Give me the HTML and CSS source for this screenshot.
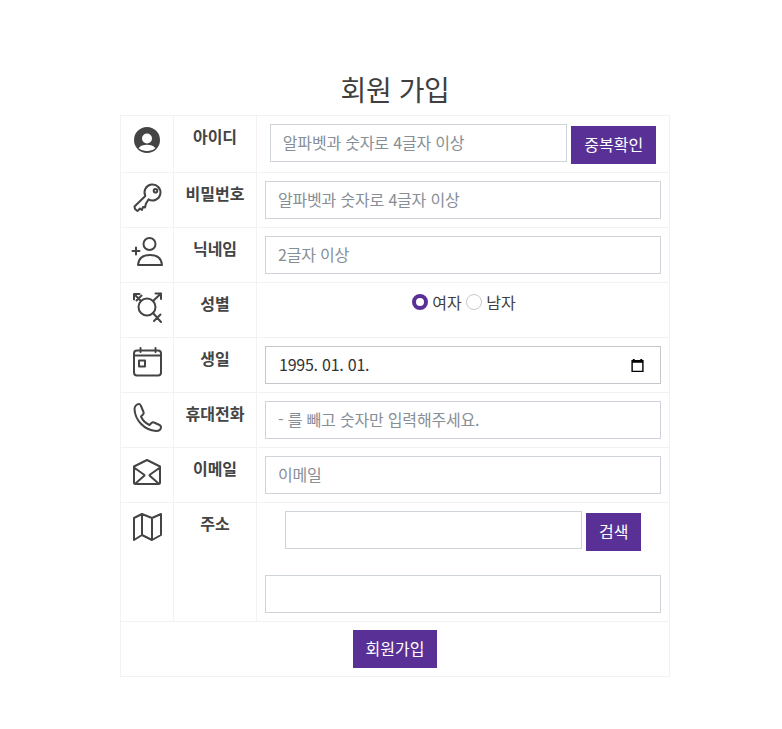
FILE: index.html
```html
<!DOCTYPE html>
<html lang="ko">
<head>
<meta charset="utf-8">
<title>회원 가입</title>
<link rel="stylesheet" href="styles.css">
</head>
<body>
<main class="page">
<h1 class="title">회원 가입</h1>
<table class="form">
<colgroup><col class="c1"><col class="c2"><col class="c3"></colgroup>
<tr>
<td class="ic"><svg class="icon" viewBox="0 0 32 32"><path class="solid" fill-rule="evenodd" d="M16 3a13 13 0 1 0 0 26a13 13 0 0 0 0-26ZM16 9.500a5 5 0 1 1 0 10a5 5 0 0 1 0-10ZM7.600 24.200C9.400 21.600 12.500 20.800 16 20.800s6.600.8 8.400 3.400A11 11 0 0 1 16 27a11 11 0 0 1-8.400-2.800Z"/></svg></td>
<th>아이디</th>
<td><input class="field short" placeholder="알파벳과 숫자로 4글자 이상"> <button class="btn">중복확인</button></td>
</tr>
<tr>
<td class="ic"><svg class="icon" viewBox="0 0 32 32"><path d="M14.300 15L3.500 25.500L4 28L6.500 30L9 27.500L11 29L12 26L14 26.500L15 22.500L17.500 18.400A8 8 0 1 0 14.300 15Z"/><circle cx="24.500" cy="9.700" r="1.800"/></svg></td>
<th>비밀번호</th>
<td><input class="field" placeholder="알파벳과 숫자로 4글자 이상"></td>
</tr>
<tr>
<td class="ic"><svg class="icon" viewBox="0 0 32 32"><circle cx="18.500" cy="8" r="6"/><path d="M7 29C7.500 22.500 12 19 19 19S30.500 22.500 31 29ZM1.500 15H8.500M5 11.500V18.500"/></svg></td>
<th>닉네임</th>
<td><input class="field" placeholder="2글자 이상"></td>
</tr>
<tr>
<td class="ic"><svg class="icon" viewBox="0 0 32 32"><circle cx="16" cy="16" r="8.500"/><path d="M22 10L30 2.500M24.500 2.500H30V8M10 10L3 3M3 8.500V3H8.500M5.500 9.500L10.500 4.500M22 22L30 31M23 30L29.500 23.500"/></svg></td>
<th>성별</th>
<td class="radios"><label class="opt"><span class="radio on"></span>여자</label> <label class="opt"><span class="radio"></span>남자</label></td>
</tr>
<tr>
<td class="ic"><svg class="icon" viewBox="0 0 32 32"><rect x="3" y="4.500" width="27" height="25" rx="3"/><path d="M3 9.500H30M9.500 2V6M24.500 2V6"/><rect x="8" y="14.500" width="6" height="6"/></svg></td>
<th>생일</th>
<td><div class="field date"><span>1995. 01. 01.</span><svg class="cal" viewBox="0 0 16 16"><path d="M3 1h2v1h6V1h2v1h1.500v13h-13V2H3ZM3 5v8.500h10V5Z"/></svg></div></td>
</tr>
<tr>
<td class="ic"><svg class="icon" viewBox="0 0 32 32"><path d="M8 3C6 3 3.500 5 3.500 8C4 19 13 29 25 30C28 30 30 28.500 30 26C30 25 29.500 24.500 28.500 24L23 21.500C22 21 21.200 21.300 20.500 22L18.500 24C15 22.500 11.500 19 10 15.500L12 13.500C12.800 12.800 13 12 12.500 11L10 5C9.600 3.800 9 3 8 3Z"/></svg></td>
<th>휴대전화</th>
<td><input class="field" placeholder="- 를 빼고 숫자만 입력해주세요."></td>
</tr>
<tr>
<td class="ic"><svg class="icon" viewBox="0 0 32 32"><path d="M3 10.500L16 4L29 10.500V26.500C29 27.500 28.500 28 27.500 28H4.500C3.500 28 3 27.500 3 26.500ZM3 11.500L13.500 19M29 11.500L18.500 19M5 27L13.500 19.500M27 27L18.500 19.500"/></svg></td>
<th>이메일</th>
<td><input class="field" placeholder="이메일"></td>
</tr>
<tr>
<td class="ic"><svg class="icon" viewBox="0 0 32 32"><path d="M3 7L11 3L21 7L30 3V24L21 29L11 24L3 29ZM11 3V24M21 7V29"/></svg></td>
<th>주소</th>
<td><input class="field short2"> <button class="btn">검색</button><br><br><input class="field"></td>
</tr>
<tr>
<td class="submit" colspan="3"><button class="btn">회원가입</button></td>
</tr>
</table>
</main>
</body>
</html>
```
FILE: styles.css
```css
* { box-sizing: border-box; }
body {
  margin: 0;
  background: #fff;
  color: #3f3f3f;
  font: 400 16px/24px "Noto Sans CJK KR", "Noto Sans", sans-serif;
}
.page { width: 550px; margin: 0 0 0 120px; padding-top: 70px; }
.title {
  margin: 0;
  font-size: 28px;
  font-weight: 400;
  line-height: 39px;
  height: 45px;
  letter-spacing: -0.4px;
  text-align: center;
  color: #3f3f3f;
}
.form { width: 550px; border-collapse: collapse; table-layout: fixed; border: 1px solid #f2f2f2; }
.c1 { width: 53px; }
.c2 { width: 83px; }
td, th { border: 1px solid #f2f2f2; padding: 8px; vertical-align: top; text-align: center; }
th { font-weight: 700; color: #444; }
.ic { padding: 0; }
.icon { display: block; width: 32px; height: 32px; margin: 8px auto 0; fill: none; stroke: #444; stroke-width: 2; stroke-linejoin: round; stroke-linecap: round; overflow: visible; }
.solid { fill: #444; stroke: none; }
.field {
  width: 396px;
  height: 38px;
  padding: 5px 12px 7px;
  border: 1px solid #ced4da;
  border-radius: 0;
  font: inherit;
  letter-spacing: -0.18px;
  color: #3f3f3f;
  background: #fff;
  outline: 0;
}
.field::placeholder { color: #868e96; opacity: 1; }
.short, .short2 { width: 297px; }
.btn {
  height: 38px;
  padding: 0 13px 2px;
  border: 0;
  background: #593196;
  color: #fff;
  font: inherit;
  vertical-align: -2px;
}
.submit .btn { vertical-align: top; }
.date { display: flex; align-items: center; justify-content: space-between; padding-left: 13px; border-color: #c6c6cc; color: #333; letter-spacing: -0.24px; }
.cal { width: 15px; height: 15px; margin: 2px 3px 0 0; fill: #000; }
.radios { padding: 7px 8px 22px 10px; }
.opt { display: inline-flex; align-items: center; gap: 4px; }
.radio { width: 16px; height: 16px; border: 1px solid #c8c8c8; border-radius: 50%; background: #fff; }
.radio.on { border: 4.500px solid #593196; }
.submit { padding: 8px; }
```
